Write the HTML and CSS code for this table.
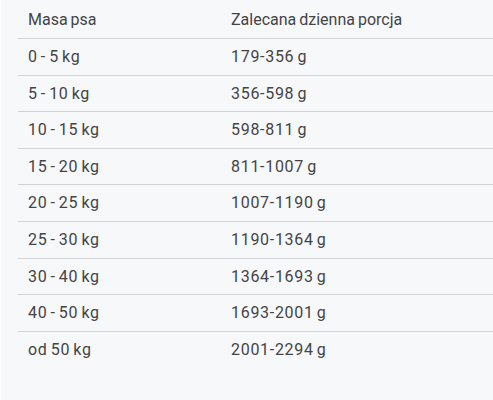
FILE: index.html
```html
<!DOCTYPE html>
<html lang="pl">
<head>
<meta charset="utf-8">
<link rel="stylesheet" href="styles.css">
</head>
<body>
<div class="wrap">
<table class="portions">
<thead>
<tr><th class="c1">Masa psa</th><th>Zalecana dzienna porcja</th></tr>
</thead>
<tbody>
<tr><td class="c1">0 - 5 kg</td><td>179-356 g</td></tr>
<tr><td class="c1">5 - 10 kg</td><td>356-598 g</td></tr>
<tr><td class="c1">10 - 15 kg</td><td>598-811 g</td></tr>
<tr><td class="c1">15 - 20 kg</td><td>811-1007 g</td></tr>
<tr><td class="c1">20 - 25 kg</td><td>1007-1190 g</td></tr>
<tr><td class="c1">25 - 30 kg</td><td>1190-1364 g</td></tr>
<tr><td class="c1">30 - 40 kg</td><td>1364-1693 g</td></tr>
<tr><td class="c1">40 - 50 kg</td><td>1693-2001 g</td></tr>
<tr><td class="c1">od 50 kg</td><td>2001-2294 g</td></tr>
</tbody>
</table>
</div>
</body>
</html>
```
FILE: styles.css
```css
html, body {
  margin: 0;
  padding: 0;
  background: #f7f8fa;
}
body {
  font-family: Roboto, "Liberation Sans", sans-serif;
  color: #444444;
  font-size: 16px;
}
.wrap {
  height: 400px;
  padding: 2.4px 0 0 17px;
  box-sizing: border-box;
  border-left: 1px solid #fdfdfe;
}
.portions {
  width: 476px;
  border-collapse: collapse;
}
.portions th,
.portions td {
  text-align: left;
  font-weight: 400;
  padding: 8px 10px;
  line-height: 19.6px;
  border-bottom: 1px solid #d2d3d5;
  word-spacing: -1px;
}
.portions td {
  letter-spacing: 0.7px;
  word-spacing: -1.5px;
}
.portions tbody tr:last-child td {
  border-bottom: none;
}
.portions .c1 {
  width: 183px;
}
```
